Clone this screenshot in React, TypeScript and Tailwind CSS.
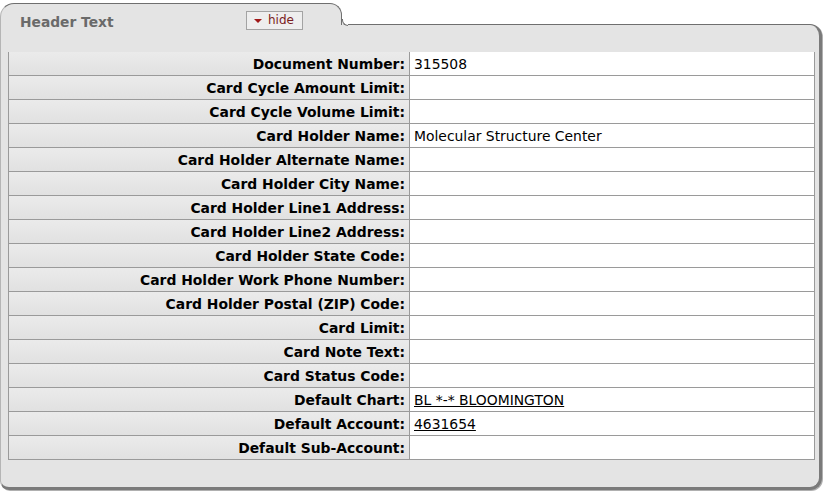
import React from "react";

const rows: { label: string; value?: string; link?: boolean }[] = [
  { label: "Document Number:", value: "315508" },
  { label: "Card Cycle Amount Limit:" },
  { label: "Card Cycle Volume Limit:" },
  { label: "Card Holder Name:", value: "Molecular Structure Center" },
  { label: "Card Holder Alternate Name:" },
  { label: "Card Holder City Name:" },
  { label: "Card Holder Line1 Address:" },
  { label: "Card Holder Line2 Address:" },
  { label: "Card Holder State Code:" },
  { label: "Card Holder Work Phone Number:" },
  { label: "Card Holder Postal (ZIP) Code:" },
  { label: "Card Limit:" },
  { label: "Card Note Text:" },
  { label: "Card Status Code:" },
  { label: "Default Chart:", value: "BL *-* BLOOMINGTON", link: true },
  { label: "Default Account:", value: "4631654", link: true },
  { label: "Default Sub-Account:" },
];

export default function App() {
  return (
    <div
      className="w-[828px] h-[497px] bg-white text-black"
      style={{ fontFamily: '"DejaVu Sans", Verdana, sans-serif' }}
    >
      <div className="w-[822px] pt-[3px]">
        {/* Tab */}
        <div className="relative z-10 h-[22px] w-[342px] border-t border-l border-r border-t-[#6f6f6f] border-l-[#b5b5b5] border-r-[#6f6f6f] rounded-tl-[14px] rounded-tr-[12px] bg-[#e4e4e4]">
          <div className="flex items-start pt-[7px]">
            <div className="w-[245px] pl-[19px] text-[13.8px] font-bold text-[#6a6a6a] leading-[16px] pt-[3px] whitespace-nowrap">
              Header Text
            </div>
            <button className="flex items-center h-[19px] w-[57px] border border-[#a3a3a3] bg-[#eeeeee] pl-[7px] pr-[6px] text-[12px] leading-none text-[#7a1c1c]">
              <span className="inline-block w-0 h-0 border-l-[4px] border-r-[4px] border-t-[4px] border-l-transparent border-r-transparent border-t-[#a01818] mr-[6px] mt-[1px]" />
              <span className="-mt-[1px]">hide</span>
            </button>
          </div>
          {/* fillet */}
          <div className="absolute right-[-7px] bottom-[-1px] w-[6px] h-[7px] bg-[#e4e4e4]">
            <div className="w-full h-full bg-white border-l border-b border-[#6f6f6f] rounded-bl-[6px]" />
          </div>
        </div>
        {/* Body */}
        <div className="-mt-px h-[466px] border-t border-t-[#6f6f6f] border-l border-l-[#b5b5b5] border-r-[3px] border-r-[#7a7a7a] border-b-[3px] border-b-[#7a7a7a] rounded-tr-[12px] rounded-bl-[9px] rounded-br-[12px] bg-[#e4e4e4] pt-[27px] pl-[7px] pr-[4px] pb-[27px] shadow-[1px_1px_0_#b0b0b0]">
          <div className="flex flex-col">
            {rows.map((r) => (
              <div key={r.label} className="flex h-[24px] border-b border-[#9a9a9a]">
                <div className="w-[402px] shrink-0 border-l border-r border-[#9a9a9a] bg-gradient-to-b from-[#ebebeb] to-[#e1e1e1] text-right pr-[4px] pt-[2px] text-[13.9px] font-bold leading-[20px] whitespace-nowrap">
                  {r.label}
                </div>
                <div className="flex-1 border-r border-[#9a9a9a] bg-white pl-[4px] pt-[2px] text-[13.9px] leading-[20px] whitespace-nowrap">
                  {r.value ? (
                    r.link ? (
                      <a className="underline text-black">{r.value}</a>
                    ) : (
                      r.value
                    )
                  ) : null}
                </div>
              </div>
            ))}
          </div>
        </div>
      </div>
    </div>
  );
}
